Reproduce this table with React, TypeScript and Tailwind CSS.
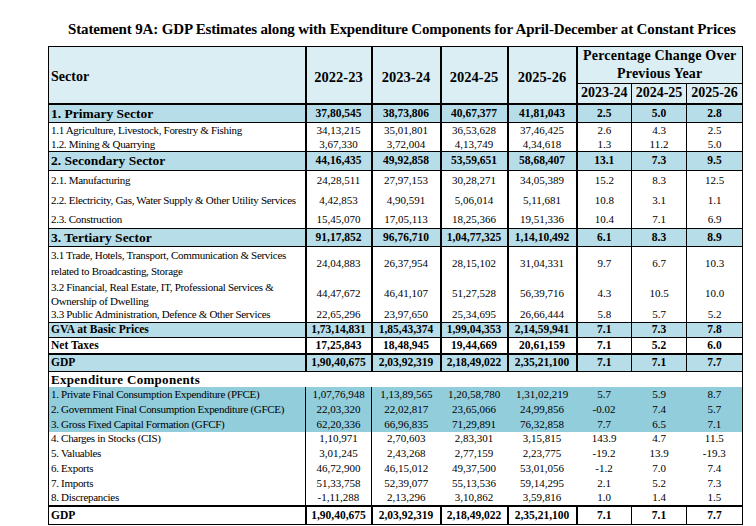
import React from "react";

const F = "font-['Liberation_Serif','Times_New_Roman',serif]";
const SEC = "bg-[#b7dde8]";
const EXP = "bg-[#92cddc]";

const VB = [
  "border-l border-r-2 border-black",
  "border-r-2 border-black",
  "border-r-2 border-black",
  "border-r-2 border-black",
  "border-r-2 border-black",
  "border-r border-black",
  "border-r border-black",
  "border-r border-black",
];
const VB_EXP = [
  "border-l border-r border-black",
  "border-r border-black",
  "",
  "",
  "",
  "",
  "",
  "border-r border-black",
];

type RowProps = {
  label: React.ReactNode;
  vals: string[];
  h: string;
  bg?: string;
  labelCls: string;
  valCls: string;
  hb?: string;
  vb?: string[];
};

function Row({ label, vals, h, bg = "", labelCls, valCls, hb = "", vb = VB }: RowProps) {
  return (
    <tr className={`${h} ${bg}`}>
      <td className={`${vb[0]} ${hb} ${labelCls} p-0 pl-[2px] text-left align-middle`}>{label}</td>
      {vals.map((v, i) => (
        <td key={i} className={`${vb[i + 1]} ${hb} ${valCls} p-0 text-center align-middle`}>
          {v}
        </td>
      ))}
    </tr>
  );
}

const secLabel = "text-[13.5px] font-bold leading-none";
const secVal = "text-[11.5px] font-bold leading-none";
const subLabel = "text-[11px] leading-none tracking-[-0.3px]";
const subVal = "text-[11px] leading-none";
const totLabel = "text-[11.5px] font-bold leading-none";

export default function App() {
  return (
    <div className={`${F} w-[756px] h-[526px] bg-white text-black overflow-hidden`}>
      <div className="h-[46px] pl-[68px] pt-[22px]">
        <h1 className="text-[15px] font-bold leading-none tracking-[-0.15px] whitespace-nowrap">
          Statement 9A: GDP Estimates along with Expenditure Components for April-December at Constant Prices
        </h1>
      </div>
      <div className="pl-[48px]">
        <table className="table-fixed border-collapse w-[694px]">
          <colgroup>
            <col className="w-[257px]" />
            <col className="w-[66px]" />
            <col className="w-[69px]" />
            <col className="w-[67px]" />
            <col className="w-[69px]" />
            <col className="w-[55px]" />
            <col className="w-[55px]" />
            <col className="w-[56px]" />
          </colgroup>
          <tbody>
            <tr className="h-[36px] bg-[#dbeef3]">
              <td rowSpan={2} className="border-l border-t border-r-2 border-b-2 border-black p-0 pl-[2px] pt-[4px] text-left align-middle text-[14px] font-bold leading-none">
                Sector
              </td>
              {["2022-23", "2023-24", "2024-25", "2025-26"].map((y) => (
                <td key={y} rowSpan={2} className="border-t border-r-2 border-b-2 border-black p-0 pt-[4px] text-center align-middle text-[14.5px] font-bold leading-none">
                  {y}
                </td>
              ))}
              <td colSpan={3} className="border-t border-r border-b border-black p-0 text-center align-middle text-[14px] font-bold leading-[18px] tracking-[0.2px]">
                Percentage Change Over
                <br />
                Previous Year
              </td>
            </tr>
            <tr className="h-[20px] bg-[#dbeef3]">
              {["2023-24", "2024-25", "2025-26"].map((y) => (
                <td key={y} className="border-r border-b-2 border-black p-0 text-center align-middle text-[14px] font-bold leading-none">
                  {y}
                </td>
              ))}
            </tr>

            <Row label="1. Primary Sector" vals={["37,80,545", "38,73,806", "40,67,377", "41,81,043", "2.5", "5.0", "2.8"]} h="h-[19px]" bg={SEC} labelCls={secLabel} valCls={secVal} hb="border-b border-black" />
            <Row label="1.1 Agriculture, Livestock, Forestry & Fishing" vals={["34,13,215", "35,01,801", "36,53,628", "37,46,425", "2.6", "4.3", "2.5"]} h="h-[15px]" labelCls={subLabel} valCls={subVal} />
            <Row label="1.2. Mining & Quarrying" vals={["3,67,330", "3,72,004", "4,13,749", "4,34,618", "1.3", "11.2", "5.0"]} h="h-[14px]" labelCls={subLabel} valCls={subVal} />
            <Row label="2. Secondary Sector" vals={["44,16,435", "49,92,858", "53,59,651", "58,68,407", "13.1", "7.3", "9.5"]} h="h-[19px]" bg={SEC} labelCls={secLabel} valCls={secVal} hb="border-t border-b border-black" />
            <Row label="2.1. Manufacturing" vals={["24,28,511", "27,97,153", "30,28,271", "34,05,389", "15.2", "8.3", "12.5"]} h="h-[19px]" labelCls={subLabel} valCls={subVal} />
            <Row label="2.2. Electricity, Gas, Water Supply & Other Utility Services" vals={["4,42,853", "4,90,591", "5,06,014", "5,11,681", "10.8", "3.1", "1.1"]} h="h-[22px]" labelCls={subLabel} valCls={subVal} />
            <Row label="2.3. Construction" vals={["15,45,070", "17,05,113", "18,25,366", "19,51,336", "10.4", "7.1", "6.9"]} h="h-[17px]" labelCls={subLabel} valCls={subVal} />
            <Row label="3. Tertiary Sector" vals={["91,17,852", "96,76,710", "1,04,77,325", "1,14,10,492", "6.1", "8.3", "8.9"]} h="h-[18px]" bg={SEC} labelCls={secLabel} valCls={secVal} hb="border-t border-b border-black" />
            <Row
              label={
                <span className="block leading-[16px]">
                  3.1 Trade, Hotels, Transport, Communication &amp; Services
                  <br />
                  related to Broadcasting, Storage
                </span>
              }
              vals={["24,04,883", "26,37,954", "28,15,102", "31,04,331", "9.7", "6.7", "10.3"]}
              h="h-[33px]"
              labelCls={subLabel}
              valCls={subVal}
            />
            <Row
              label={
                <span className="block leading-[14px]">
                  3.2 Financial, Real Estate, IT, Professional Services &amp;
                  <br />
                  Ownership of Dwelling
                </span>
              }
              vals={["44,47,672", "46,41,107", "51,27,528", "56,39,716", "4.3", "10.5", "10.0"]}
              h="h-[28px]"
              labelCls={subLabel}
              valCls={subVal}
            />
            <Row label="3.3 Public Administration, Defence & Other Services" vals={["22,65,296", "23,97,650", "25,34,695", "26,66,444", "5.8", "5.7", "5.2"]} h="h-[15px]" labelCls={subLabel} valCls={subVal} />
            <Row label="GVA at Basic Prices" vals={["1,73,14,831", "1,85,43,374", "1,99,04,353", "2,14,59,941", "7.1", "7.3", "7.8"]} h="h-[15px]" bg={SEC} labelCls={totLabel} valCls={secVal} hb="border-t border-b border-black" />
            <Row label="Net Taxes" vals={["17,25,843", "18,48,945", "19,44,669", "20,61,159", "7.1", "5.2", "6.0"]} h="h-[16px]" labelCls={totLabel} valCls={secVal} hb="border-b-2 border-black" />
            <Row label="GDP" vals={["1,90,40,675", "2,03,92,319", "2,18,49,022", "2,35,21,100", "7.1", "7.1", "7.7"]} h="h-[18px]" bg={SEC} labelCls={totLabel} valCls={secVal} hb="border-b border-black" />

            <tr className="h-[15px]">
              <td colSpan={8} className="border-l border-r border-black p-0 pl-[2px] text-left align-middle text-[13px] font-bold leading-none tracking-[0.3px]">
                Expenditure Components
              </td>
            </tr>

            <Row label="1. Private Final Consumption Expenditure (PFCE)" vals={["1,07,76,948", "1,13,89,565", "1,20,58,780", "1,31,02,219", "5.7", "5.9", "8.7"]} h="h-[15px]" bg={EXP} labelCls={subLabel} valCls={subVal} vb={VB_EXP} />
            <Row label="2. Government Final Consumption Expenditure (GFCE)" vals={["22,03,320", "22,02,817", "23,65,066", "24,99,856", "-0.02", "7.4", "5.7"]} h="h-[15px]" bg={EXP} labelCls={subLabel} valCls={subVal} vb={VB_EXP} />
            <Row label="3. Gross Fixed Capital Formation (GFCF)" vals={["62,20,336", "66,96,835", "71,29,891", "76,32,858", "7.7", "6.5", "7.1"]} h="h-[15px]" bg={EXP} labelCls={subLabel} valCls={subVal} vb={VB_EXP} />
            <Row label="4. Charges in Stocks (CIS)" vals={["1,10,971", "2,70,603", "2,83,301", "3,15,815", "143.9", "4.7", "11.5"]} h="h-[14px]" labelCls={subLabel} valCls={subVal} vb={VB_EXP} />
            <Row label="5. Valuables" vals={["3,01,245", "2,43,268", "2,77,159", "2,23,775", "-19.2", "13.9", "-19.3"]} h="h-[15px]" labelCls={subLabel} valCls={subVal} vb={VB_EXP} />
            <Row label="6. Exports" vals={["46,72,900", "46,15,012", "49,37,500", "53,01,056", "-1.2", "7.0", "7.4"]} h="h-[15px]" labelCls={subLabel} valCls={subVal} vb={VB_EXP} />
            <Row label="7. Imports" vals={["51,33,758", "52,39,077", "55,13,536", "59,14,295", "2.1", "5.2", "7.3"]} h="h-[15px]" labelCls={subLabel} valCls={subVal} vb={VB_EXP} />
            <Row label="8. Discrepancies" vals={["-1,11,288", "2,13,296", "3,10,862", "3,59,816", "1.0", "1.4", "1.5"]} h="h-[15px]" labelCls={subLabel} valCls={subVal} vb={VB_EXP} />
            <Row label="GDP" vals={["1,90,40,675", "2,03,92,319", "2,18,49,022", "2,35,21,100", "7.1", "7.1", "7.7"]} h="h-[19px]" labelCls={totLabel} valCls={secVal} hb="border-t-2 border-b border-black" />
          </tbody>
        </table>
      </div>
    </div>
  );
}
